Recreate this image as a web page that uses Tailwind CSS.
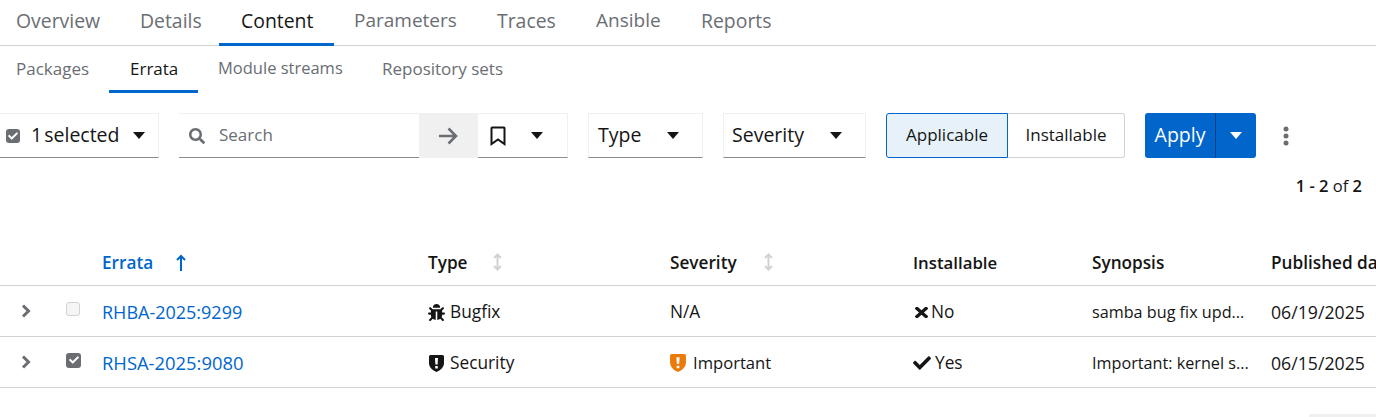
<!DOCTYPE html>
<html lang="en">
<head>
    <meta charset="UTF-8">
    <title>Errata</title>
    <script src="https://cdn.jsdelivr.net/npm/@tailwindcss/browser@4"></script>
</head>
<body class="bg-white h-[417px] w-[1376px] overflow-hidden font-['Open_Sans',sans-serif] text-[#151515]">

    <!-- primary tabs -->
    <div class="flex h-[46px] border-b border-[#d2d2d2] text-[19.4px] text-[#6a6e73] whitespace-nowrap">
        <a class="w-[120px] pl-4 pt-[6px]">Overview</a>
        <a class="w-[99px] pl-5 pt-[6px]">Details</a>
        <a class="w-[115px] pl-[22px] pt-[6px] text-[#151515] h-[46px] border-b-[3px] border-[#0066cc]">Content</a>
        <a class="w-[143px] pl-5 pt-[6px] text-[19px]">Parameters</a>
        <a class="w-[99px] pl-5 pt-[6px]">Traces</a>
        <a class="w-[105px] pl-5 pt-[6px] text-[19px]">Ansible</a>
        <a class="pl-5 pt-[6px]">Reports</a>
    </div>

    <!-- secondary tabs -->
    <div class="flex h-[47px] text-[17px] text-[#6a6e73] whitespace-nowrap">
        <a class="w-[109px] pl-4 pt-[10px]">Packages</a>
        <a class="w-[89px] pl-[21px] pt-[10px] text-[#151515] border-b-[3px] border-[#0066cc]">Errata</a>
        <a class="w-[164px] pl-5 pt-[10px] text-[16.5px]">Module streams</a>
        <a class="pl-5 pt-[10px]">Repository sets</a>
    </div>

    <!-- toolbar -->
    <div class="flex items-stretch h-[45px] mt-[20px] text-[19.5px]">
        <div class="flex items-center w-[159px] border-t border-r border-[#f0f0f0] border-b border-b-[#8a8d90] pl-[6px]">
            <span class="w-[14px] h-[14px] rounded-[3px] bg-[#6a6e73] flex items-center justify-center">
                <svg class="w-[10px] h-[10px]" viewBox="0 0 512 512" fill="#fff"><path d="M173.898 439.404l-166.4-166.4c-9.997-9.997-9.997-26.206 0-36.204l36.203-36.204c9.997-9.998 26.207-9.998 36.204 0L192 312.69 432.095 72.596c9.997-9.997 26.207-9.997 36.204 0l36.203 36.204c9.997 9.997 9.997 26.206 0 36.204l-294.4 294.401c-9.998 9.997-26.207 9.997-36.204-.001z"/></svg>
            </span>
            <span class="ml-[11px] w-[88px] -mt-[2px] whitespace-nowrap [word-spacing:-3px]">1 selected</span>
            <svg class="ml-[14px] w-[12px] h-[7px]" viewBox="0 0 12 7" fill="#151515"><path d="M0 0h12L6 7z"/></svg>
        </div>
        <div class="flex items-center w-[240px] ml-[20px] border-t border-[#f0f0f0] border-b border-b-[#8a8d90] pl-[10px] text-[17px] text-[#6a6e73]">
            <svg class="w-[16px] h-[16px]" viewBox="0 0 512 512" fill="#6a6e73"><path d="M505 442.7L405.3 343c-4.5-4.5-10.6-7-17-7H372c27.6-35.3 44-79.7 44-128C416 93.1 322.9 0 208 0S0 93.1 0 208s93.1 208 208 208c48.3 0 92.7-16.4 128-44v16.3c0 6.4 2.5 12.500 7 17l99.7 99.7c9.4 9.4 24.6 9.4 33.9 0l28.3-28.3c9.4-9.4 9.4-24.6.1-34zM208 336c-70.7 0-128-57.2-128-128 0-70.7 57.2-128 128-128 70.7 0 128 57.2 128 128 0 70.7-57.2 128-128 128z"/></svg>
            <span class="ml-[14px] -mt-[2px]">Search</span>
        </div>
        <div class="flex items-center justify-center w-[59px] bg-[#f0f0f0]">
            <svg class="w-[20px] h-[18px] -ml-[1px]" viewBox="0 0 20 18" fill="none" stroke="#6a6e73" stroke-width="2.6"><path d="M1 9h17M10.500 1.500L18 9l-7.500 7.500"/></svg>
        </div>
        <div class="flex items-center w-[90px] border-t border-r border-[#f0f0f0] border-b border-b-[#8a8d90] pl-[12px]">
            <svg class="w-[16px] h-[20px]" viewBox="0 0 16 20" fill="none" stroke="#151515" stroke-width="2"><path d="M2 1.500h12a.5.500 0 0 1 .5.500v16L8 13.500 1.500 18V2a.5.500 0 0 1 .5-.500z"/></svg>
            <svg class="ml-[25px] w-[12px] h-[7px]" viewBox="0 0 12 7" fill="#151515"><path d="M0 0h12L6 7z"/></svg>
        </div>
        <div class="flex items-center w-[115px] ml-[20px] border-t border-x border-[#f0f0f0] border-b border-b-[#8a8d90] pl-[9px]">
            <span class="w-[69px] -mt-[2px]">Type</span>
            <svg class="w-[12px] h-[7px]" viewBox="0 0 12 7" fill="#151515"><path d="M0 0h12L6 7z"/></svg>
        </div>
        <div class="flex items-center w-[143px] ml-[20px] border-t border-x border-[#f0f0f0] border-b border-b-[#8a8d90] pl-[8px]">
            <span class="w-[98px] -mt-[2px]">Severity</span>
            <svg class="w-[12px] h-[7px]" viewBox="0 0 12 7" fill="#151515"><path d="M0 0h12L6 7z"/></svg>
        </div>
        <div class="flex ml-[20px] text-[17px]">
            <button class="w-[122px] pb-[2px] bg-[#e7f1fa] border border-[#0066cc] rounded-l-[3px]">Applicable</button>
            <button class="w-[117px] pb-[2px] border border-l-0 border-[#d2d2d2] rounded-r-[3px]">Installable</button>
        </div>
        <div class="flex ml-[20px] bg-[#0066cc] rounded-[3px] text-white">
            <span class="w-[71px] pb-[2px] flex items-center justify-center border-r border-[#004080]">Apply</span>
            <span class="w-[40px] flex items-center justify-center">
                <svg class="w-[12px] h-[7px]" viewBox="0 0 12 7" fill="#fff"><path d="M0 0h12L6 7z"/></svg>
            </span>
        </div>
        <div class="flex items-center ml-[26px]">
            <svg class="w-[8px] h-[20px]" viewBox="0 0 8 20" fill="#6a6e73"><circle cx="4" cy="3" r="2.500"/><circle cx="4" cy="10" r="2.500"/><circle cx="4" cy="17" r="2.500"/></svg>
        </div>
    </div>

    <!-- pagination -->
    <div class="flex justify-end pr-[14px] mt-[17px] h-[22px] text-[16.5px] leading-[22px]"><b class="font-semibold">1 - 2</b>&nbsp;of&nbsp;<b class="font-semibold">2</b></div>

    <!-- table -->
    <div class="grid grid-cols-[52px_50px_326px_242px_243px_179px_179px_1fr] mt-[44px] text-[17.3px] whitespace-nowrap">
        <div class="col-span-8 grid grid-cols-subgrid items-center h-[45px] border-b border-[#d2d2d2] text-[17.2px] font-semibold">
            <span></span><span></span>
            <span class="flex items-center text-[#0066cc] -mt-[1px]">Errata
                <svg class="ml-[23px] w-[10px] h-[17px]" viewBox="0 0 10 17" fill="none" stroke="#0066cc" stroke-width="2"><path d="M5 17V2M1 6l4-4 4 4"/></svg>
            </span>
            <span class="flex items-center -mt-[1px]">Type
                <svg class="ml-[25px] w-[9px] h-[18px]" viewBox="0 0 9 18" fill="none" stroke="#d2d2d2" stroke-width="2"><path d="M4.500 1v16M1 5l3.500-3.500L8 5M1 13l3.500 3.500L8 13"/></svg>
            </span>
            <span class="flex items-center -mt-[1px]">Severity
                <svg class="ml-[27px] w-[9px] h-[18px]" viewBox="0 0 9 18" fill="none" stroke="#d2d2d2" stroke-width="2"><path d="M4.500 1v16M1 5l3.500-3.500L8 5M1 13l3.500 3.500L8 13"/></svg>
            </span>
            <span class="-mt-[1px] text-[16.8px]">Installable</span>
            <span class="-mt-[1px]">Synopsis</span>
            <span class="-mt-[1px]">Published date</span>
        </div>

        <div class="col-span-8 grid grid-cols-subgrid items-center h-[51px] pt-[2px] border-b border-[#d2d2d2]">
            <span class="pl-[21px] -mt-[2px]"><svg class="w-[10px] h-[14px]" viewBox="0 0 10 14" fill="none" stroke="#6a6e73" stroke-width="3"><path d="M2 1.500L7.500 7 2 12.500"/></svg></span>
            <span class="pl-[14px] -mt-[6px]"><span class="block w-[14px] h-[14px] rounded-[3px] bg-[#f5f5f5] border border-[#d2d2d2]"></span></span>
            <a class="text-[#0066cc] text-[18px]">RHBA-2025:9299</a>
            <span class="flex items-center">
                <svg class="w-[17px] h-[17px]" viewBox="0 0 512 512" fill="#151515"><path d="M511.988 288.9c-.478 17.43-15.217 31.1-32.653 31.1H424v16c0 21.864-4.882 42.584-13.6 61.145l60.228 60.228c12.496 12.497 12.496 32.758 0 45.255-12.498 12.497-32.759 12.496-45.256 0l-54.736-54.736C345.886 467.965 314.351 480 280 480V236c0-6.627-5.373-12-12-12h-24c-6.627 0-12 5.373-12 12v244c-34.351 0-65.886-12.035-90.636-32.108l-54.736 54.736c-12.498 12.497-32.759 12.496-45.256 0-12.496-12.497-12.496-32.758 0-45.255l60.228-60.228C92.882 378.584 88 357.864 88 336v-16H32.666C15.23 320 .491 306.33.013 288.9-.484 270.816 14.028 256 32 256h56v-58.745l-46.628-46.628c-12.496-12.497-12.496-32.758 0-45.255 12.498-12.497 32.758-12.497 45.256 0L141.255 160h229.489l54.627-54.627c12.498-12.497 32.758-12.497 45.256 0 12.496 12.497 12.496 32.758 0 45.255L424 197.255V256h56c17.972 0 32.484 14.816 31.988 32.9zM257 0c-61.856 0-112 50.144-112 112h224C369 50.144 318.856 0 257 0z"/></svg>
                <span class="ml-[5px]">Bugfix</span>
            </span>
            <span>N/A</span>
            <span class="flex items-center">
                <svg class="w-[13px] h-[11px] ml-[2px]" viewBox="0 89 352 334" preserveAspectRatio="none" fill="#151515"><path d="M242.72 256l100.07-100.07c12.28-12.28 12.28-32.19 0-44.48l-22.24-22.24c-12.28-12.28-32.19-12.28-44.48 0L176 189.28 75.93 89.21c-12.28-12.28-32.19-12.28-44.48 0L9.21 111.45c-12.28 12.28-12.28 32.19 0 44.48L109.28 256 9.21 356.07c-12.28 12.28-12.28 32.19 0 44.48l22.24 22.24c12.28 12.28 32.2 12.28 44.48 0L176 322.72l100.07 100.07c12.28 12.28 32.2 12.28 44.48 0l22.24-22.24c12.28-12.28 12.28-32.19 0-44.48L242.72 256z"/></svg>
                <span class="ml-[3px]">No</span>
            </span>
            <span class="text-[16.2px]">samba bug fix upd...</span>
            <span class="text-[17.7px]">06/19/2025</span>
        </div>

        <div class="col-span-8 grid grid-cols-subgrid items-center h-[51px] pt-[2px] border-b border-[#d2d2d2]">
            <span class="pl-[21px] -mt-[2px]"><svg class="w-[10px] h-[14px]" viewBox="0 0 10 14" fill="none" stroke="#6a6e73" stroke-width="3"><path d="M2 1.500L7.500 7 2 12.500"/></svg></span>
            <span class="pl-[14px] -mt-[6px]">
                <span class="flex items-center justify-center w-[15px] h-[15px] rounded-[3px] bg-[#6a6e73]">
                    <svg class="w-[10px] h-[10px]" viewBox="0 0 512 512" fill="#fff"><path d="M173.898 439.404l-166.4-166.4c-9.997-9.997-9.997-26.206 0-36.204l36.203-36.204c9.997-9.998 26.207-9.998 36.204 0L192 312.69 432.095 72.596c9.997-9.997 26.207-9.997 36.204 0l36.203 36.204c9.997 9.997 9.997 26.206 0 36.204l-294.4 294.401c-9.998 9.997-26.207 9.997-36.204-.001z"/></svg>
                </span>
            </span>
            <a class="text-[#0066cc] text-[18.4px]">RHSA-2025:9080</a>
            <span class="flex items-center">
                <svg class="w-[15px] h-[17px] ml-[1px]" viewBox="0 0 15 17" fill="#151515"><path d="M1.500 0h12A1.500 1.500 0 0 1 15 1.500V8c0 4-3.500 7.500-7.500 9C3.500 15.500 0 12 0 8V1.500A1.500 1.500 0 0 1 1.500 0z"/><path fill="#fff" d="M6 3h3l-.4 6.500H6.400zM6.200 11h2.600v2.500H6.200z"/></svg>
                <span class="ml-[6px]">Security</span>
            </span>
            <span class="flex items-center">
                <svg class="w-[16px] h-[18px]" viewBox="0 0 15 17" fill="#ec7a08"><path d="M1.500 0h12A1.500 1.500 0 0 1 15 1.500V8c0 4-3.500 7.500-7.500 9C3.500 15.500 0 12 0 8V1.500A1.500 1.500 0 0 1 1.500 0z"/><path fill="#fff" d="M6 3h3l-.4 6.500H6.400zM6.200 11h2.600v2.500H6.200z"/></svg>
                <span class="ml-[7px] text-[16.6px]">Important</span>
            </span>
            <span class="flex items-center">
                <svg class="w-[18px] h-[18px]" viewBox="0 0 512 512" fill="#151515"><path d="M173.898 439.404l-166.4-166.4c-9.997-9.997-9.997-26.206 0-36.204l36.203-36.204c9.997-9.998 26.207-9.998 36.204 0L192 312.69 432.095 72.596c9.997-9.997 26.207-9.997 36.204 0l36.203 36.204c9.997 9.997 9.997 26.206 0 36.204l-294.4 294.401c-9.998 9.997-26.207 9.997-36.204-.001z"/></svg>
                <span class="ml-[4px]">Yes</span>
            </span>
            <span class="text-[16.2px]">Important: kernel s...</span>
            <span class="text-[17.7px]">06/15/2025</span>
        </div>
    </div>

    <div class="ml-auto mt-[26px] w-[67px] h-[10px] bg-[#f0f0f0]"></div>

</body>
</html>
